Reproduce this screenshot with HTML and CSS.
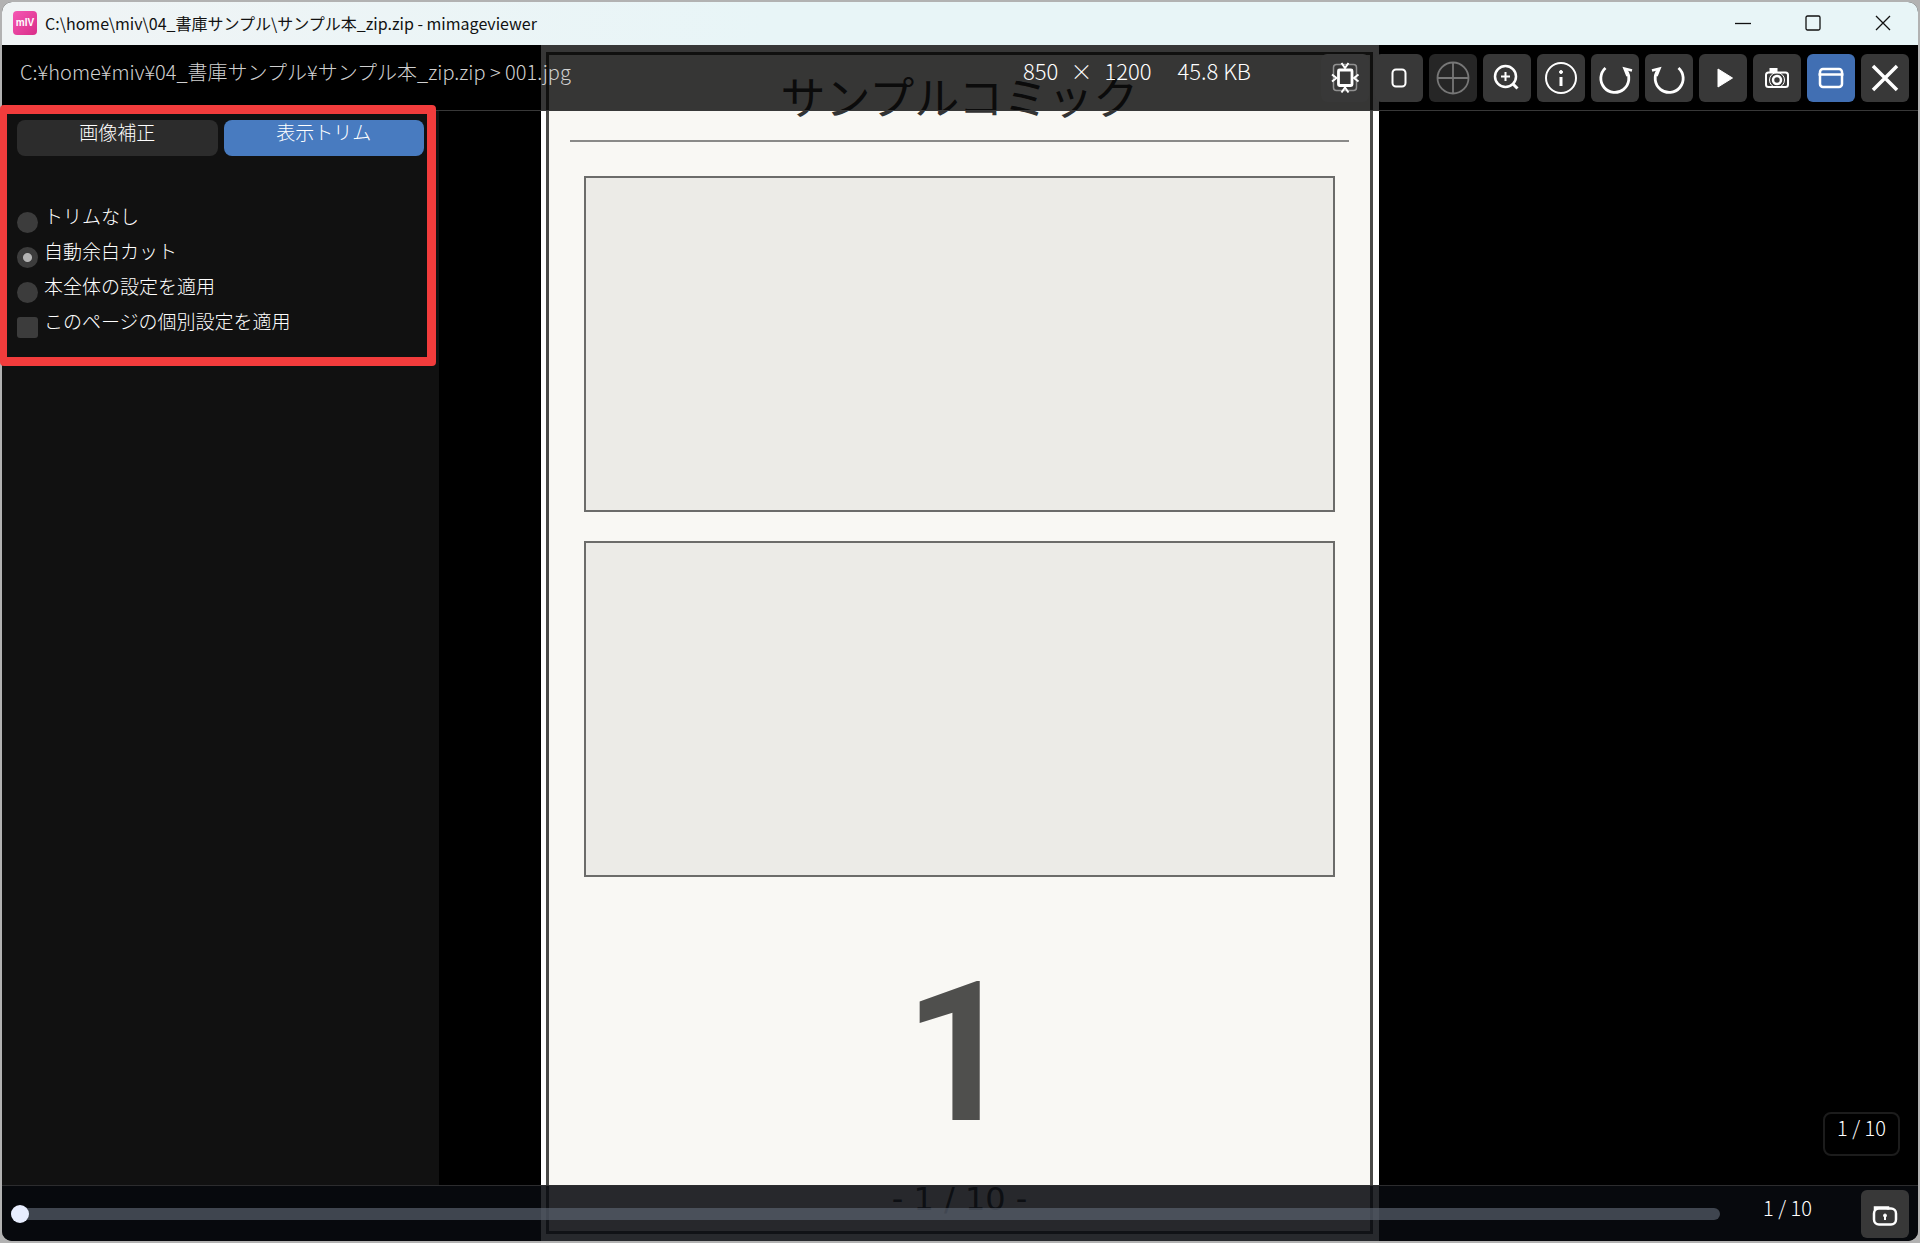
FILE: index.html
```
<!DOCTYPE html>
<html lang="ja">
<head>
  <meta charset="UTF-8">
  <meta name="viewport" content="width=device-width, initial-scale=1">
  <title>mimageviewer</title>
  <link rel="stylesheet" href="styles.css">
</head>
<body>

  <div class="window">
    <header class="titlebar">
      <span class="app-icon">mIV</span>
      <h1 class="window-title">C:\home\miv\04_書庫サンプル\サンプル本_zip.zip - mimageviewer</h1>
      <div class="window-buttons">
        <button class="window-button" aria-label="最小化"><svg viewBox="0 0 16 16"><path d="M0 8.5h16"/></svg></button>
        <button class="window-button" aria-label="最大化"><svg viewBox="0 0 16 16"><rect x="1" y="1" width="14" height="14" rx="1.5"/></svg></button>
        <button class="window-button" aria-label="閉じる"><svg viewBox="0 0 16 16"><path d="M1 1l14 14M15 1L1 15"/></svg></button>
      </div>
    </header>

    <main class="viewer">
      <!-- Page image -->
      <div class="page">
        <div class="page-frame">
          <div class="page-title">サンプルコミック</div>
          <div class="koma"></div>
          <div class="koma"></div>
          <div class="page-number">1</div>
          <div class="page-footer">- 1 / 10 -</div>
        </div>
      </div>

      <!-- Controls over the page -->
      <div class="overlay">
        <div class="topbar">
          <span class="path">C:¥home¥miv¥04_書庫サンプル¥サンプル本_zip.zip &gt; 001.jpg</span>
          <div class="info">
            <span class="dimensions"><span>850</span><span>×</span><span>1200</span></span>
            <span>45.8 KB</span>
          </div>
          <div class="tools">
            <button class="tool" aria-label="余白カット"><svg viewBox="0 0 48 48"><rect x="12.5" y="10.5" width="23" height="26" rx="3" stroke-width="1.5" opacity=".45"/><rect x="17.5" y="16" width="13.5" height="15.5" rx="1" stroke-width="2.8"/><path d="M20.5 9l3.5 5 3.5-5M20.5 38.5l3.5-5 3.5 5M11 20.5l4.5 3.5-4.5 3.5M37.5 20.5l-4.5 3.5 4.5 3.5" stroke-width="2"/></svg></button>
            <button class="tool" aria-label="単ページ"><svg viewBox="0 0 48 48"><rect x="17.5" y="15.5" width="13" height="17" rx="3.5" stroke-width="2"/></svg></button>
            <button class="tool" aria-label="パノラマ" disabled><svg viewBox="0 0 48 48"><circle cx="24" cy="24" r="15.5" stroke-width="1.8"/><path d="M24 8.5v31M8.5 24h31" stroke-width="1.8"/></svg></button>
            <button class="tool" aria-label="拡大"><svg viewBox="0 0 48 48"><circle cx="22.5" cy="22.5" r="10.5" stroke-width="2.5"/><path d="M30 30l4.5 4.5" stroke-width="3"/><path d="M22.5 18v9M18 22.5h9" stroke-width="2"/></svg></button>
            <button class="tool" aria-label="情報"><svg viewBox="0 0 48 48"><circle cx="24" cy="24" r="15" stroke-width="2"/><circle cx="24" cy="18" r="1.5" class="solid"/><path d="M24 23v9" stroke-width="3"/></svg></button>
            <button class="tool" aria-label="右回転"><svg viewBox="0 0 48 48"><path d="M14.5 14A14 14 0 1 0 35 16" stroke-width="2.8"/><path d="M36.5 22l-3-7.5 7.5 2" stroke-width="2.5"/></svg></button>
            <button class="tool" aria-label="左回転"><svg viewBox="0 0 48 48"><path d="M33.5 14A14 14 0 1 1 13 16" stroke-width="2.8"/><path d="M11.5 22l3-7.5-7.5 2" stroke-width="2.5"/></svg></button>
            <button class="tool" aria-label="再生"><svg viewBox="0 0 48 48"><path d="M19 15l14.5 9L19 33z" class="solid"/></svg></button>
            <button class="tool" aria-label="撮影"><svg viewBox="0 0 48 48"><rect x="13" y="18.5" width="22" height="14.5" rx="2.5" stroke-width="2"/><path d="M17.5 17.5v-2.500h6v2.500z" class="solid" stroke-width="2"/><circle cx="24" cy="26" r="7.5" stroke-width="1"/><circle cx="24" cy="26" r="4" stroke-width="2.5"/></svg></button>
            <button class="tool active" aria-label="バーを固定"><svg viewBox="0 0 48 48"><rect x="13" y="15" width="22" height="18" rx="3" stroke-width="2.5"/><path d="M11.5 20.5h25" stroke-width="2.5"/></svg></button>
            <button class="tool" aria-label="ビューアを閉じる"><svg viewBox="0 0 48 48"><path d="M12 12l24 24M36 12L12 36" stroke-width="3.5"/></svg></button>
          </div>
        </div>

        <div class="middle">
          <aside class="side-panel">
            <div class="settings">
              <div class="tabs">
                <button class="tab">画像補正</button>
                <button class="tab selected">表示トリム</button>
              </div>
              <div class="options">
                <label class="option"><input type="radio" name="trim"><span>トリムなし</span></label>
                <label class="option"><input type="radio" name="trim" checked><span>自動余白カット</span></label>
                <label class="option"><input type="radio" name="trim"><span>本全体の設定を適用</span></label>
                <label class="option"><input type="checkbox"><span>このページの個別設定を適用</span></label>
              </div>
            </div>
          </aside>
          <div class="page-badge">1 / 10</div>
        </div>

        <div class="bottombar">
          <input class="seek" type="range" min="1" max="10" value="1" aria-label="ページ">
          <span class="page-count">1 / 10</span>
          <button class="tool" aria-label="ロック"><svg viewBox="0 0 48 48"><rect x="13" y="18.5" width="22" height="16" rx="5" stroke-width="2.5"/><path d="M14 20v-2.500h13v2" stroke-width="2.5"/><circle cx="24" cy="25.5" r="1.5" class="solid"/><path d="M24 26v4" stroke-width="2"/></svg></button>
        </div>
      </div>
    </main>
  </div>

</body>
</html>
```
FILE: styles.css
```
* {
  box-sizing: border-box;
}

body {
  margin: 0;
  padding: 2px;
  height: 100vh;
  background-color: #b2b2b2;
  font-family: "Noto Sans CJK JP", sans-serif;
  font-weight: 300;
}

button {
  padding: 0;
  border: none;
  font: inherit;
  color: inherit;
  cursor: pointer;
}

.window {
  display: flex;
  flex-direction: column;
  height: 100%;
  border-radius: 10px;
  background-color: #000;
}

/* Title bar */
.titlebar {
  display: flex;
  align-items: center;
  gap: 8px;
  height: 43px;
  padding: 0 0 2px 11px;
  border-radius: 10px 10px 0 0;
  background: linear-gradient(90deg, #f0f4f5, #e8f5f7 40%, #e8f5f7);
  color: #111;
}

.app-icon {
  width: 24px;
  height: 24px;
  border-radius: 4px;
  background: linear-gradient(135deg, #f558b4, #d92d88);
  color: #fff;
  font: bold 10px/24px "Liberation Sans", sans-serif;
  text-align: center;
}

.window-title {
  margin: 0;
  font-size: 16px;
  font-weight: 400;
}

.window-buttons {
  display: flex;
  margin-left: auto;
}

.window-button {
  display: grid;
  place-items: center;
  width: 70px;
  height: 41px;
  background: none;
}

.window-button svg {
  width: 16px;
  height: 16px;
  fill: none;
  stroke: #111;
  stroke-width: 1.3;
}

/* The page and the controls share one grid cell */
.viewer {
  flex: 1;
  min-height: 0;
  display: grid;
  grid-template: 100% / 100%;
}

.page,
.overlay {
  grid-area: 1 / 1;
}

.page {
  justify-self: center;
  height: 100%;
  aspect-ratio: 838 / 1196;
  padding: 7px 6px 7px 5px;
  background-color: #fff;
}

.page-frame {
  display: flex;
  flex-direction: column;
  height: 100%;
  padding: 0 35px;
  border: 3px solid #4a4a48;
  background-color: #f9f8f4;
  color: #333;
}

.page-title {
  height: 87px;
  margin: 0 -14px 34px;
  padding-top: 9px;
  border-bottom: 2px solid #8a8a88;
  font-size: 45px;
  font-weight: 400;
  line-height: 64px;
  text-align: center;
}

.koma {
  height: 336px;
  margin-bottom: 29px;
  border: 2px solid #6c6c6a;
  background-color: #ecebe7;
}

.page-number {
  margin-top: 33px;
  font: bold 194px/230px Roboto, sans-serif;
  color: #4f4f4d;
  text-align: center;
}

.page-footer {
  margin-top: auto;
  padding-bottom: 14px;
  font: 32px/36px "DejaVu Sans", sans-serif;
  text-align: center;
}

.overlay {
  display: flex;
  flex-direction: column;
  color: #fff;
  font-size: 20px;
}

/* Top bar */
.topbar {
  display: flex;
  align-items: center;
  height: 66px;
  padding: 0 9px 0 18px;
  background-color: rgba(0, 0, 0, 0.785);
  border-bottom: 1px solid #383838;
}

.path {
  padding-bottom: 12px;
  color: #d0d0d0;
}

.info {
  display: flex;
  gap: 26px;
  margin-left: auto;
  padding-bottom: 16px;
  font-size: 22px;
}

.dimensions {
  display: flex;
  gap: 12px;
}

.tools {
  display: flex;
  gap: 6px;
  margin-left: 70px;
}

.tool {
  width: 48px;
  height: 48px;
  border-radius: 6px;
  background-color: #383838;
}

.tool svg {
  display: block;
  width: 48px;
  height: 48px;
  fill: none;
  stroke: #fff;
}

.tool .solid {
  fill: #fff;
}

.tool:disabled {
  background-color: #262626;
}

.tool:disabled svg {
  stroke: #777;
}

.tool.active {
  background-color: #416fb3;
}

/* Side panel */
.middle {
  flex: 1;
  min-height: 0;
  display: flex;
  justify-content: space-between;
}

.side-panel {
  width: 437px;
  background-color: #111;
}

.settings {
  position: relative;
  padding: 9px 15px 27px;
}

/* Red marker round the settings */
.settings::after {
  content: "";
  position: absolute;
  inset: -6px 3px -1px -2px;
  border: 9px solid #f23c3c;
  border-left-width: 7px;
  border-radius: 4px;
  pointer-events: none;
}

.tabs {
  display: flex;
  gap: 6px;
}

.tab {
  flex: 1;
  height: 36px;
  padding-bottom: 12px;
  border-radius: 8px;
  background-color: #2c2c2c;
  font-size: 19px;
  line-height: 24px;
}

.tab.selected {
  background-color: #487bc0;
}

.options {
  display: flex;
  flex-direction: column;
  gap: 7px;
  margin-top: 49px;
}

.option {
  display: flex;
  align-items: flex-end;
  gap: 6px;
  height: 28px;
  font-size: 19px;
  line-height: 34px;
}

.option input {
  appearance: none;
  width: 21px;
  height: 21px;
  margin: 0;
  border-radius: 3px;
  background-color: #3c3c3c;
}

.option input[type="radio"] {
  border-radius: 50%;
}

.option input:checked {
  background-image: radial-gradient(circle, #b4b4b4 4px, transparent 5px);
}

.page-badge {
  align-self: flex-end;
  width: 77px;
  height: 44px;
  margin: 0 18px 29px 0;
  border: 2px solid #1c1c1c;
  border-radius: 8px;
  line-height: 28px;
  text-align: center;
}

/* Bottom bar */
.bottombar {
  display: flex;
  align-items: center;
  height: 56px;
  padding: 0 9px;
  background-color: rgba(8, 10, 15, 0.875);
  border-top: 1px solid #2c2c2e;
  border-radius: 0 0 10px 10px;
}

.seek {
  appearance: none;
  flex: 1;
  height: 18px;
  margin: 0;
  background: none;
}

.seek::-webkit-slider-runnable-track {
  height: 12px;
  border-radius: 6px;
  background-color: rgba(94, 101, 115, 0.65);
}

.seek::-webkit-slider-thumb {
  appearance: none;
  width: 18px;
  height: 18px;
  margin-top: -3px;
  border-radius: 50%;
  background-color: #e8eeff;
}

.page-count {
  width: 135px;
  margin-right: 6px;
  padding-bottom: 12px;
  text-align: center;
}
```
